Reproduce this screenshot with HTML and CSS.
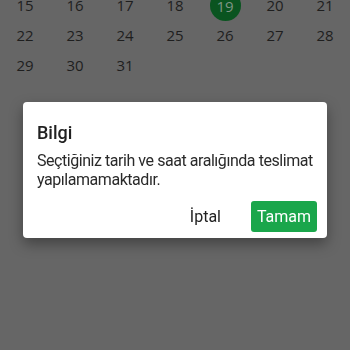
FILE: index.html
```html
<!DOCTYPE html>
<html lang="tr">
<head>
<meta charset="utf-8">
<link rel="stylesheet" href="styles.css">
</head>
<body>
<div class="calendar">
  <span class="day">15</span><span class="day">16</span><span class="day">17</span><span class="day">18</span><span class="day selected">19</span><span class="day">20</span><span class="day">21</span>
  <span class="day">22</span><span class="day">23</span><span class="day">24</span><span class="day">25</span><span class="day">26</span><span class="day">27</span><span class="day">28</span>
  <span class="day">29</span><span class="day">30</span><span class="day">31</span>
</div>
<div class="backdrop">
  <div class="dialog">
    <h2 class="title">Bilgi</h2>
    <p class="message">Seçtiğiniz tarih ve saat aralığında teslimat yapılamamaktadır.</p>
    <div class="actions">
      <button class="btn btn-text">İptal</button>
      <button class="btn btn-primary">Tamam</button>
    </div>
  </div>
</div>
</body>
</html>
```
FILE: styles.css
```css
html, body {
  margin: 0;
  padding: 0;
  width: 350px;
  height: 350px;
  overflow: hidden;
  background: #666666;
}
.calendar {
  display: grid;
  grid-template-columns: repeat(7, 50px);
  grid-auto-rows: 30px;
  margin-top: -10px;
  font-family: "Open Sans", "Noto Sans", sans-serif;
  font-size: 15px;
  color: #1e1e1e;
}
.day {
  display: flex;
  align-items: center;
  justify-content: center;
}
.selected {
  width: 31px;
  height: 31px;
  margin: 0 auto;
  border-radius: 50%;
  background: #0a5420;
  color: #7f9585;
}
.backdrop {
  position: fixed;
  inset: 0;
  display: flex;
  justify-content: center;
  padding-top: 102px;
  box-sizing: border-box;
}
.dialog {
  width: 304px;
  height: 136px;
  box-sizing: border-box;
  background: #ffffff;
  border-radius: 4px;
  box-shadow: 0 6px 14px rgba(0, 0, 0, 0.35);
  padding: 20px 8px 8px 14px;
  font-family: Roboto, "Noto Sans", sans-serif;
  color: #212121;
}
.title {
  margin: 0;
  font-size: 18px;
  font-weight: 500;
  line-height: 21px;
}
.message {
  margin: 8px 0 0;
  font-size: 16px;
  letter-spacing: -0.45px;
  line-height: 19px;
  color: #2a2a2a;
}
.actions {
  display: flex;
  justify-content: flex-end;
  align-items: center;
  gap: 14px;
  margin-top: 12px;
}
.btn {
  font-family: Roboto, "Noto Sans", sans-serif;
  font-size: 16px;
  border: none;
  background: none;
  padding: 0;
  height: 31px;
  border-radius: 3px;
}
.btn-text {
  color: #222222;
  padding: 0 16px;
}
.btn-primary {
  background: #1aa64b;
  color: #ffffff;
  width: 66px;
  margin-right: 2px;
}
```
